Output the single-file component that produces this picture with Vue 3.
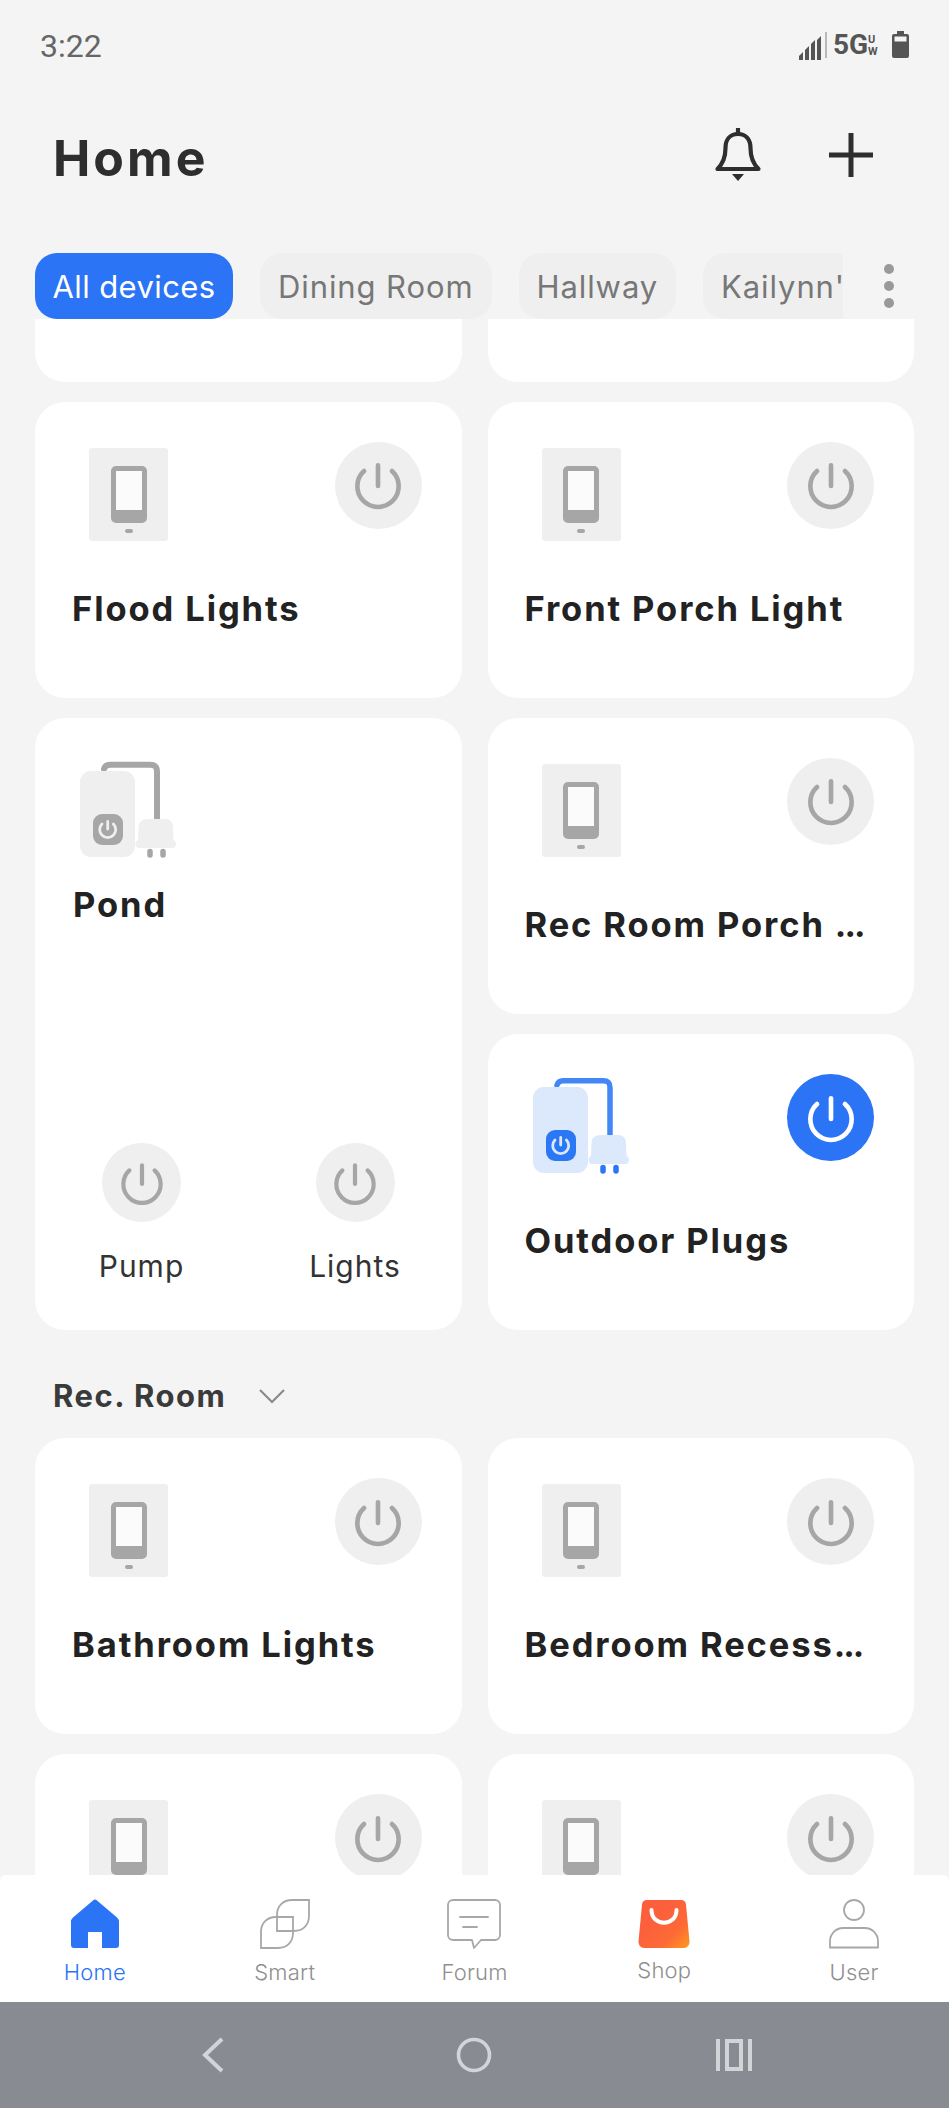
<script setup>
const power = 'M12 4.400v8M6.600 6.600a8 8 0 1 0 10.800 0'
const tabs = ['Home', 'Smart', 'Forum', 'Shop', 'User']
const topCards = ['Flood Lights', 'Front Porch Light']
const recCards = [
  { id: 1, name: 'Bathroom Lights' },
  { id: 2, name: 'Bedroom Recess', tail: '...' },
  { id: 3, name: '' },
  { id: 4, name: '' }
]
</script>

<template>
  <div class="phone">
    <div class="status">
      <span class="time">3:22</span>
      <div class="status-right">
        <svg class="signal" width="30" height="30" viewBox="0 0 30 30">
          <path d="M1 29v-4l4-4v8zM7 29V19l4-4v14zM13 29V13l4-4v20zM19 29V9l4-4v24z" fill="#555" />
          <path d="M28 1v26" stroke="#aaa" stroke-width="1.600" />
        </svg>
        <span class="fiveg">5G</span>
        <span class="uw"><i>U</i><i>W</i></span>
        <svg class="battery" width="17" height="27" viewBox="0 0 17 27">
          <path d="M5 0h7v3h3a2 2 0 0 1 2 2v20a2 2 0 0 1-2 2H2a2 2 0 0 1-2-2V5a2 2 0 0 1 2-2h3z" fill="#555" />
          <rect x="2.500" y="5.500" width="12" height="5" fill="#f4f4f4" />
        </svg>
      </div>
    </div>

    <header class="header">
      <h1>Home</h1>
      <div class="header-actions">
        <svg width="50" height="54" viewBox="0 0 50 54" fill="none" stroke="#2e2e2e" stroke-width="4.200" stroke-linejoin="round">
          <path d="M25 6c-8.500 0-12.500 6-12.500 14 0 9-2 15-8 21h41c-6-6-8-12-8-21 0-8-4-14-12.500-14z" />
          <path d="M25 1v5" stroke-linecap="round" />
          <path d="M19 46h12l-6 7z" fill="#2e2e2e" stroke="none" />
        </svg>
        <svg width="44" height="44" viewBox="0 0 44 44" stroke="#2e2e2e" stroke-width="5">
          <path d="M22 0v44M0 22h44" />
        </svg>
      </div>
    </header>

    <nav class="chips">
      <div class="chip-track">
        <span class="chip active">All devices</span>
        <span class="chip">Dining Room</span>
        <span class="chip">Hallway</span>
        <span class="chip">Kailynn's Room</span>
      </div>
      <div class="dots"><i></i><i></i><i></i></div>
    </nav>

    <main class="scroller">
      <div class="grid">
        <div class="card stub"></div>
        <div class="card stub"></div>

        <article v-for="name in topCards" :key="name" class="card">
          <div class="card-top">
            <div class="plate"><span class="screen"></span><span class="led"></span></div>
            <button class="power"><svg width="62" height="62" viewBox="0 0 24 24"><path :d="power" /></svg></button>
          </div>
          <h2>{{ name }}</h2>
        </article>

        <article class="card tall">
          <svg class="plug pond-plug" width="98" height="100" viewBox="0 0 98 100">
            <path d="M24 8c1-3 3-4.300 6-4.300h40c5 0 7 2 7 7V60" fill="none" stroke="#a6a6a6" stroke-width="6" stroke-linecap="round" />
            <rect x="0" y="10" width="55" height="86" rx="11" fill="#efefef" />
            <rect x="13" y="53" width="30" height="31" rx="9" fill="#a6a6a6" />
            <path d="M27.700 60.500v7.500M22 63a8 8 0 1 0 11.400 0" fill="none" stroke="#efefef" stroke-width="2.800" stroke-linecap="round" />
            <path d="M68 58h17c5 0 8 3 8 8l.5 13c1.500.5 2.500 2 2.500 4s-1.500 4-3.500 4H59c-2 0-3.500-2-3.500-4s1-3.500 2.500-4l.5-13c0-5 4-8 9-8z" fill="#efefef" />
            <path d="M70 90.500v3.500M83 90.500v3.500" stroke="#a6a6a6" stroke-width="5.500" stroke-linecap="round" />
          </svg>
          <h2 class="pond-title">Pond</h2>
          <div class="subs">
            <div v-for="s in ['Pump', 'Lights']" :key="s" class="sub">
              <button class="power small"><svg width="56" height="56" viewBox="0 0 24 24"><path :d="power" /></svg></button>
              <span>{{ s }}</span>
            </div>
          </div>
        </article>

        <article class="card">
          <div class="card-top">
            <div class="plate"><span class="screen"></span><span class="led"></span></div>
            <button class="power"><svg width="62" height="62" viewBox="0 0 24 24"><path :d="power" /></svg></button>
          </div>
          <h2>Rec Room Porch <span class="tail">...</span></h2>
        </article>

        <article class="card">
          <div class="card-top">
            <svg class="plug" width="98" height="100" viewBox="0 0 98 100">
              <path d="M24 8c1-3 3-4.300 6-4.300h40c5 0 7 2 7 7V60" fill="none" stroke="#4287f5" stroke-width="5.500" stroke-linecap="round" />
              <rect x="0" y="10" width="55" height="86" rx="11" fill="#dce8fc" />
              <rect x="13" y="53" width="30" height="31" rx="9" fill="#2a78f5" />
              <path d="M27.700 60.500v7.500M22 63a8 8 0 1 0 11.400 0" fill="none" stroke="#dce8fc" stroke-width="2.800" stroke-linecap="round" />
              <path d="M68 58h17c5 0 8 3 8 8l.5 13c1.500.5 2.500 2 2.500 4s-1.500 4-3.500 4H59c-2 0-3.500-2-3.500-4s1-3.500 2.500-4l.5-13c0-5 4-8 9-8z" fill="#dce8fc" />
              <path d="M70 90.500v3.500M83 90.500v3.500" stroke="#2a78f5" stroke-width="5.500" stroke-linecap="round" />
            </svg>
            <button class="power active"><svg width="62" height="62" viewBox="0 0 24 24"><path :d="power" /></svg></button>
          </div>
          <h2>Outdoor Plugs</h2>
        </article>
      </div>

      <div class="section">
        <span>Rec. Room</span>
        <svg width="28" height="16" viewBox="0 0 28 16" fill="none" stroke="#8a8a8a" stroke-width="2.200"><path d="M2 2l12 12L26 2" /></svg>
      </div>

      <div class="grid">
        <article v-for="c in recCards" :key="c.id" class="card">
          <div class="card-top">
            <div class="plate"><span class="screen"></span><span class="led"></span></div>
            <button class="power"><svg width="62" height="62" viewBox="0 0 24 24"><path :d="power" /></svg></button>
          </div>
          <h2>{{ c.name }}<span v-if="c.tail" class="tail">{{ c.tail }}</span></h2>
        </article>
      </div>
    </main>

    <footer class="tabbar">
      <div v-for="(t, i) in tabs" :key="t" class="tab" :class="{ current: i === 0, shop: i === 3 }">
        <svg v-if="i === 0" width="50" height="50" viewBox="0 0 50 50">
          <path d="M23 1.500a3 3 0 0 1 4 0l20 17a6 6 0 0 1 2 4.500V46a3 3 0 0 1-3 3H32V33H18v16H4a3 3 0 0 1-3-3V23a6 6 0 0 1 2-4.500z" fill="#2a74f5" />
        </svg>
        <svg v-else-if="i === 1" width="50" height="50" viewBox="0 0 50 50" fill="none" stroke="#a8a8a8" stroke-width="1.800">
          <path d="M17 32V16C17 7 23 1 32 1h17v16c0 9-6 15-15 15z" />
          <path d="M1 49V33c0-9 6-15 15-15h17v16c0 9-6 15-15 15z" />
        </svg>
        <svg v-else-if="i === 2" width="54" height="50" viewBox="0 0 54 50" fill="none" stroke="#a8a8a8" stroke-width="1.800" stroke-linejoin="round">
          <path d="M6 1h42a5 5 0 0 1 5 5v30a5 5 0 0 1-5 5H34l-7 8-2-8H6a5 5 0 0 1-5-5V6a5 5 0 0 1 5-5z" />
          <path d="M13 18h28M16 28h14" stroke-linecap="round" />
        </svg>
        <svg v-else-if="i === 3" width="52" height="50" viewBox="0 0 52 50">
          <defs>
            <linearGradient id="bag" x1="0.350" y1="0.350" x2="1" y2="1">
              <stop offset="0" stop-color="#fb5f3c" />
              <stop offset="0.550" stop-color="#fd6a36" />
              <stop offset="1" stop-color="#fd9a1b" />
            </linearGradient>
          </defs>
          <path d="M9 1h34a5 5 0 0 1 5 4.500l3.500 37A6 6 0 0 1 46 49H6a6 6 0 0 1-5.500-6.500L4 5.500A5 5 0 0 1 9 1z" fill="url(#bag)" />
          <path d="M13.500 11c0 17 25 17 25 0" fill="none" stroke="#fff" stroke-width="4" stroke-linecap="round" />
        </svg>
        <svg v-else width="50" height="50" viewBox="0 0 50 50" fill="none" stroke="#a8a8a8" stroke-width="1.800">
          <circle cx="25" cy="11" r="10" />
          <path d="M1 48.500V42c0-7 6-13 13-13h22c7 0 13 6 13 13v6.500z" />
        </svg>
        <span>{{ t }}</span>
      </div>
    </footer>

    <div class="sysnav">
      <svg width="24" height="36" viewBox="0 0 24 36" fill="none" stroke="#d2d4d8" stroke-width="4"><path d="M21 2L4 18l17 16" /></svg>
      <svg width="36" height="36" viewBox="0 0 36 36" fill="none" stroke="#d2d4d8" stroke-width="3.600"><circle cx="18" cy="18" r="15.500" /></svg>
      <svg width="36" height="32" viewBox="0 0 36 32" fill="none" stroke="#d2d4d8" stroke-width="4"><path d="M2 0v32M34 0v32" /><rect x="11" y="2" width="14" height="28" /></svg>
    </div>
  </div>
</template>

<style>
html, body { margin: 0; background: #f4f4f4; }
</style>

<style scoped>
.phone {
  width: 949px;
  height: 2108px;
  display: flex;
  flex-direction: column;
  overflow: hidden;
  background: #f4f4f4;
  font-family: Inter, "Noto Sans", sans-serif;
  color: #222;
}
.status {
  height: 92px;
  flex: none;
  padding: 0 40px;
  display: flex;
  justify-content: space-between;
  align-items: flex-start;
  box-sizing: border-box;
}
.time {
  margin-top: 27px;
  font: 400 32px/38px Roboto, sans-serif;
  color: #666;
}
.status-right {
  margin: 31px 0 0;
  display: flex;
  align-items: flex-start;
  color: #555;
}
.signal { margin-right: 5px; }
.fiveg { font: 700 28px/28px Roboto, sans-serif; width: 33px; }
.uw {
  display: flex;
  flex-direction: column;
  font: 700 11px/12px Roboto, sans-serif;
  margin: 3px 0 0 2px;
  width: 24px;
}
.uw i { font-style: normal; }
.header {
  height: 128px;
  flex: none;
  padding: 0 76px 0 53px;
  box-sizing: border-box;
  display: flex;
  justify-content: space-between;
  align-items: center;
}
h1 {
  margin: 0 0 -4px;
  font: 700 50px/56px Inter, sans-serif;
  color: #2e2e2e;
  letter-spacing: 3px;
}
.header-actions { display: flex; align-items: center; gap: 66px; margin-top: -2px; }
.chips {
  height: 66px;
  flex: none;
  margin-top: 33px;
  padding-left: 35px;
  display: flex;
  position: relative;
}
.chip-track {
  width: 808px;
  display: flex;
  gap: 27px;
  overflow: hidden;
}
.chip {
  flex: none;
  height: 66px;
  padding: 0 18px;
  border-radius: 22px;
  background: #efefef;
  color: #777;
  font: 400 31px/67px Inter, sans-serif;
  letter-spacing: 0.900px;
  white-space: nowrap;
}
.chip.active { background: #2a74f5; color: #fff; padding: 0 17.500px; letter-spacing: 0.400px; }
.dots {
  margin-left: 41px;
  padding-top: 11px;
  display: flex;
  flex-direction: column;
  gap: 7px;
}
.dots i { width: 10px; height: 10px; border-radius: 50%; background: #999; }
.scroller { flex: 1; min-height: 0; overflow: hidden; padding: 0 35px; }
.grid {
  display: grid;
  grid-template-columns: 426.500px 426.500px;
  column-gap: 26px;
  row-gap: 20.200px;
}
.card {
  height: 296px;
  box-sizing: border-box;
  padding: 46px 40px 0 37px;
  background: #fff;
  border-radius: 30px;
}
.card.stub { height: 62.500px; padding: 0; border-radius: 0 0 30px 30px; }
.card.tall { grid-row: span 2; height: auto; padding: 0; position: relative; }
.card-top { display: flex; justify-content: space-between; align-items: flex-start; height: 93px; }
.plate {
  margin-left: 17px;
  width: 79px;
  height: 93px;
  border-radius: 3px;
  background: #efefef;
  display: flex;
  flex-direction: column;
  align-items: center;
  padding-top: 18px;
  box-sizing: border-box;
}
.screen {
  width: 36px;
  height: 57px;
  box-sizing: border-box;
  border: 5px solid #a6a6a6;
  border-bottom-width: 13px;
  border-radius: 5px;
  background: #fbfbfb;
}
.led { width: 8px; height: 4px; margin-top: 6px; border-radius: 2px; background: #a6a6a6; }
.power {
  width: 87px;
  height: 87px;
  margin-top: -6px;
  padding: 0;
  border: 0;
  border-radius: 50%;
  background: #efefef;
  display: flex;
  align-items: center;
  justify-content: center;
}
.power path { fill: none; stroke: #a6a6a6; stroke-width: 1.800; stroke-linecap: round; }
.power.active { background: #2a74f5; }
.power.active path { stroke: #fff; }
.power.small { width: 79px; height: 79px; margin: 0; }
h2 {
  margin: 46px 0 0;
  min-height: 44px;
  font: 700 34.500px/44px Inter, sans-serif;
  letter-spacing: 1.900px;
  color: #222;
  white-space: nowrap;
}
.tail { letter-spacing: -2px; }
.plug { margin-left: 8px; margin-top: -3px; flex: none; }
.pond-plug { margin: 43px 0 0 45px; display: block; }
.pond-title { margin: 22px 0 0 38px; }
.subs {
  position: absolute;
  left: 67px;
  right: 67px;
  bottom: 46px;
  display: flex;
  justify-content: space-between;
}
.sub {
  width: 79px;
  display: flex;
  flex-direction: column;
  align-items: center;
  gap: 26px;
}
.sub span { font: 400 30px/36px Inter, sans-serif; letter-spacing: 1px; color: #333; white-space: nowrap; }
.section {
  height: 108px;
  display: flex;
  align-items: center;
  gap: 32px;
  padding: 24px 0 0 18px;
  box-sizing: border-box;
}
.section span { font: 700 31px/40px Inter, sans-serif; letter-spacing: 1.500px; color: #3a3a3a; }
.tabbar {
  height: 127px;
  flex: none;
  background: #fff;
  border-radius: 6px 6px 0 0;
  display: grid;
  grid-template-columns: repeat(5, 1fr);
  padding-top: 24px;
  box-sizing: border-box;
}
.tab {
  display: flex;
  flex-direction: column;
  align-items: center;
  gap: 8px;
  font: 300 22px/30px Inter, sans-serif;
  letter-spacing: 0.200px;
  color: #8f8f8f;
}
.tab.current { color: #2a74f5; }
.tab.shop span { margin-top: -2px; }
.sysnav {
  height: 106px;
  flex: none;
  background: #898b93;
  display: flex;
  align-items: center;
}
.sysnav svg:nth-child(1) { margin-left: 201px; }
.sysnav svg:nth-child(2) { margin-left: 231px; }
.sysnav svg:nth-child(3) { margin-left: 224px; }
</style>
